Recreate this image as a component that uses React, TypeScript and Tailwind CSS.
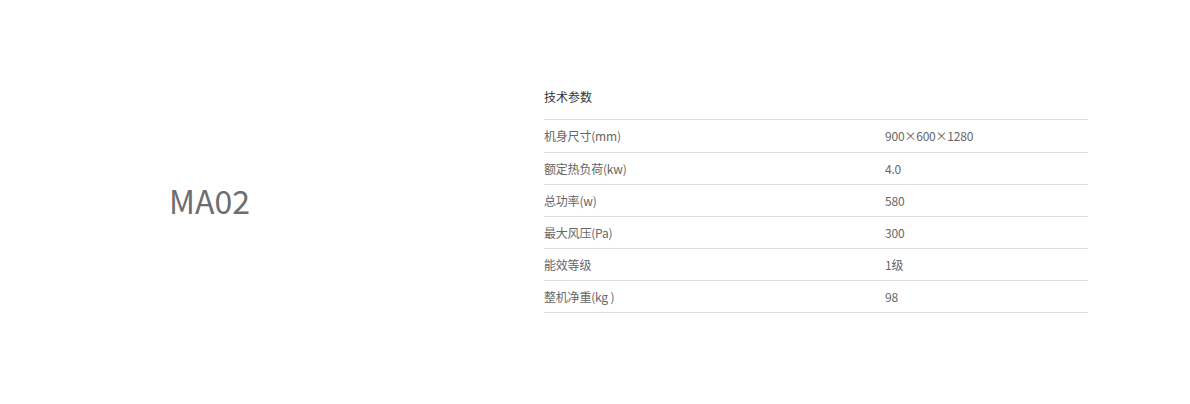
const specs = [
  { label: '机身尺寸(mm)', value: '900×600×1280' },
  { label: '额定热负荷(kw)', value: '4.0' },
  { label: '总功率(w)', value: '580' },
  { label: '最大风压(Pa)', value: '300' },
  { label: '能效等级', value: '1级' },
  { label: '整机净重(kg )', value: '98' },
];

const App = () => {
  return (
    <main
      className="w-[1190px] h-[404px] bg-white flex items-start pt-[88px]"
      style={{ fontFamily: '"Noto Sans CJK SC", "Noto Sans", sans-serif' }}
    >
      <div className="w-[544px] h-[224px] flex items-center pl-[169px]">
        <h2 className="text-[32px] leading-none text-[#6e6e6e]">MA02</h2>
      </div>
      <section className="w-[544px] text-[12px] text-[#666]">
        <h3 className="leading-[18px] pb-[13px] border-b border-[#ddd] text-[#333]">技术参数</h3>
        {specs.map((s, i) => (
          <div
            key={s.label}
            className={
              i === 0
                ? 'flex items-center h-[33px] border-b border-[#ddd] tracking-[-0.2px]'
                : 'flex items-center h-[32px] border-b border-[#ddd] tracking-[-0.2px]'
            }
          >
            <span className="w-[341px]">{s.label}</span>
            <span>{s.value}</span>
          </div>
        ))}
      </section>
    </main>
  );
};

export default App;
